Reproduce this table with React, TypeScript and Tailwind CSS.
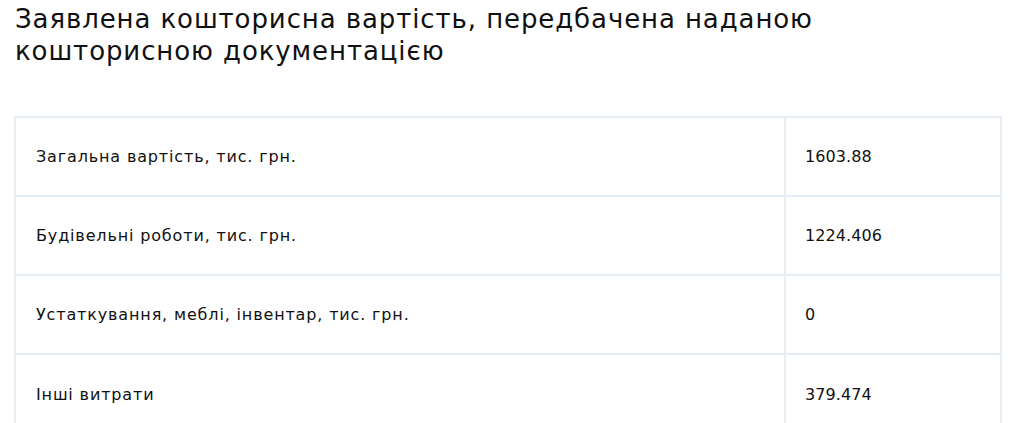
import React from "react";

const rows = [
  ["Загальна вартість, тис. грн.", "1603.88"],
  ["Будівельні роботи, тис. грн.", "1224.406"],
  ["Устаткування, меблі, інвентар, тис. грн.", "0"],
  ["Інші витрати", "379.474"],
];

export default function App() {
  return (
    <div className="w-[1024px] h-[423px] overflow-hidden bg-white text-[#111] [font-family:'DejaVu_Sans',sans-serif]">
      <h1 className="pl-[15px] pt-[3px] text-[26px] leading-[32px] font-normal tracking-[0.9px]">
        Заявлена кошторисна вартість, передбачена наданою
        <br />
        кошторисною документацією
      </h1>
      <div className="ml-[14px] mt-[49px] w-[988px] border-2 border-[#e6edf5]">
        {rows.map(([label, value], i) => (
          <div
            key={i}
            className={`grid grid-cols-[768px_1fr] h-[79px] ${i < rows.length - 1 ? "border-b-2 border-[#e6edf5]" : ""}`}
          >
            <div className="flex items-center pl-[20px] text-[16px] tracking-[0.85px]">{label}</div>
            <div className="flex items-center pl-[19px] text-[16px] tracking-[0.1px] border-l-2 border-[#e6edf5]">{value}</div>
          </div>
        ))}
      </div>
    </div>
  );
}
